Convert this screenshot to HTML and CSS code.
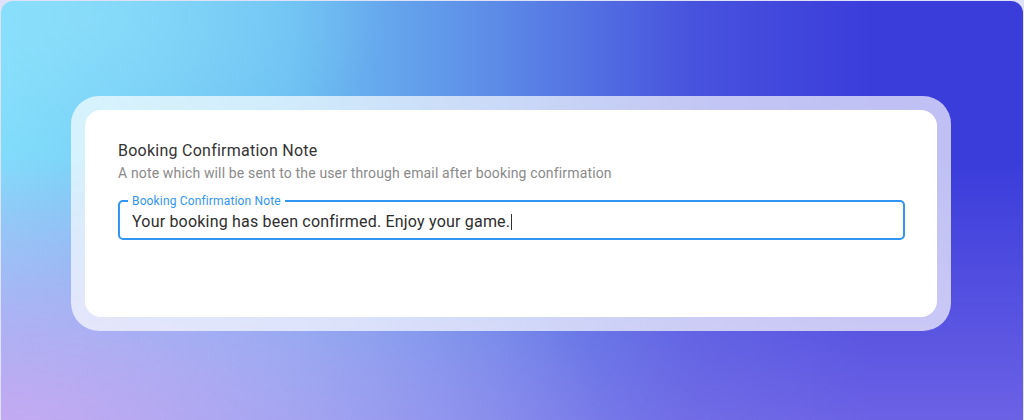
FILE: index.html
```html
<!DOCTYPE html>
<html lang="en">
<head>
<meta charset="utf-8">
<title>Booking Confirmation Note</title>
<link rel="stylesheet" href="styles.css">
</head>
<body>
  <main class="stage">
    <section class="frame">
      <div class="card">
        <h2 class="card-title">Booking Confirmation Note</h2>
        <p class="card-hint">A note which will be sent to the user through email after booking confirmation</p>
        <fieldset class="field">
          <legend class="field-label">Booking Confirmation Note</legend>
          <div class="field-value">Your booking has been confirmed. Enjoy your game.<span class="caret"></span></div>
        </fieldset>
      </div>
    </section>
  </main>
</body>
</html>
```

FILE: styles.css
```css
html, body {
  margin: 0;
  padding: 0;
}

body {
  background: #dfe1f6;
  font-family: Roboto, "Liberation Sans", Arial, sans-serif;
  padding: 1px 0 0 1px;
  width: 1024px;
  height: 420px;
  box-sizing: border-box;
  overflow: hidden;
}

.stage {
  width: 1022px;
  height: 430px;
  border-radius: 12px;
  box-sizing: border-box;
  padding: 95px 0 0 70px;
  background:
    radial-gradient(ellipse 60% 65% at 0% 100%, rgba(200, 170, 242, 0.95) 0%, rgba(200, 170, 242, 0) 100%),
    radial-gradient(ellipse 30% 35% at 8% 4%, rgba(150, 228, 252, 0.5) 0%, rgba(150, 228, 252, 0) 100%),
    linear-gradient(to bottom, rgba(150, 130, 238, 0) 38%, rgba(150, 130, 238, 0.55) 100%),
    linear-gradient(90deg, #80dcfa 0%, #6cc0f2 28%, #5d8ce7 48%, #4752dd 68%, #3b3ddb 85%, #3b3ddb 100%);
}

.frame {
  width: 880px;
  box-sizing: border-box;
  padding: 14px;
  border-radius: 28px;
  background: rgba(255, 255, 255, 0.68);
}

.card {
  height: 207px;
  box-sizing: border-box;
  padding: 32px 32px 0 33px;
  background: #ffffff;
  border-radius: 16px;
}

.card-title {
  margin: 0;
  font-size: 16px;
  font-weight: 400;
  line-height: 18px;
  letter-spacing: 0.25px;
  color: #333333;
}

.card-hint {
  margin: 4px 0 0 0;
  font-size: 14px;
  line-height: 18px;
  letter-spacing: 0.15px;
  color: #8a8a8a;
}

.field {
  margin: 13px 0 0 0;
  padding: 0 12px 4px 12px;
  border: 2px solid #3196f3;
  border-radius: 5px;
}

.field-label {
  margin-left: -4px;
  padding: 0 4px;
  font-size: 12px;
  line-height: 12px;
  letter-spacing: 0.15px;
  color: #3196f3;
}

.field-value {
  padding-top: 3px;
  font-size: 16px;
  line-height: 24px;
  letter-spacing: 0.2px;
  color: #2e2e2e;
}

.caret {
  display: inline-block;
  width: 1px;
  height: 16px;
  margin-left: 1px;
  vertical-align: -3px;
  background: #333333;
}
```
